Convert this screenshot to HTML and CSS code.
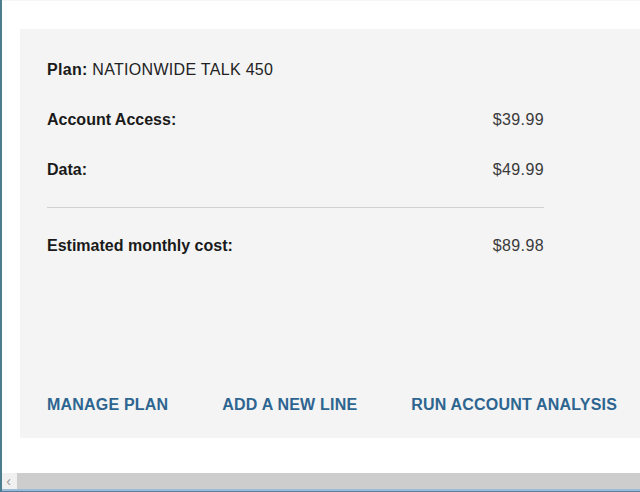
FILE: index.html
```html
<!DOCTYPE html>
<html>
<head>
<meta charset="utf-8">
<link rel="stylesheet" href="styles.css">
</head>
<body>
<div class="frame">
  <div class="viewport">
    <div class="panel">
      <div class="summary">
        <div class="row plan"><span class="label">Plan:</span> NATIONWIDE TALK 450</div>
        <div class="row"><span class="label">Account Access:</span><span class="price">$39.99</span></div>
        <div class="row"><span class="label">Data:</span><span class="price">$49.99</span></div>
        <div class="divider"></div>
        <div class="row total"><span class="label">Estimated monthly cost:</span><span class="price">$89.98</span></div>
      </div>
      <div class="links">
        <a class="link" href="#">MANAGE PLAN</a>
        <a class="link" href="#">ADD A NEW LINE</a>
        <a class="link" href="#">RUN ACCOUNT ANALYSIS</a>
      </div>
    </div>
  </div>
  <div class="hscroll">
    <div class="arrow">&#8249;</div>
    <div class="track"></div>
  </div>
  <div class="bottomline"></div>
</div>
</body>
</html>
```
FILE: styles.css
```css
html, body {
  margin: 0;
  padding: 0;
  background: #ffffff;
}
body {
  font-family: "Liberation Sans", Arial, sans-serif;
  color: #222222;
}
.frame {
  width: 640px;
  height: 492px;
  display: flex;
  flex-direction: column;
  border-left: 2px solid #4c7d8e;
  box-sizing: border-box;
  overflow: hidden;
}
.viewport {
  flex: 1;
  padding: 28px 0 0 18px;
  background: #ffffff;
  border-top: 1px solid #f6f6f6;
}
.panel {
  background: #f4f4f4;
  height: 409px;
  padding: 0 0 0 27px;
  display: flex;
  flex-direction: column;
  box-sizing: border-box;
}
.summary {
  width: 497px;
  padding-top: 31px;
}
.row {
  height: 20px;
  display: flex;
  align-items: center;
  justify-content: space-between;
  font-size: 16px;
  margin-bottom: 30px;
}
.plan {
  justify-content: flex-start;
  white-space: pre;
  letter-spacing: 0.3px;
}
.label {
  font-weight: bold;
  color: #1a1a1a;
}
.price {
  color: #3a3a3a;
  letter-spacing: 0.4px;
}
.divider {
  height: 1px;
  background: #d0d0d0;
  margin: -3px 0 28px;
}
.links {
  margin-top: auto;
  margin-bottom: 24px;
  display: flex;
  gap: 54px;
}
.link {
  font-size: 16px;
  font-weight: bold;
  color: #2d6590;
  text-decoration: none;
  letter-spacing: 0.2px;
}
.hscroll {
  height: 16px;
  display: flex;
  background: #cdcdcd;
  margin-left: -2px;
}
.arrow {
  width: 17px;
  background: #f0f0f0;
  color: #9a9a9a;
  font-size: 14px;
  line-height: 16px;
  text-align: center;
}
.track {
  flex: 1;
}
.bottomline {
  height: 2px;
  background: #9bbcd8;
  margin-left: -2px;
  border-bottom: 1px solid #5c7d9c;
}
```
